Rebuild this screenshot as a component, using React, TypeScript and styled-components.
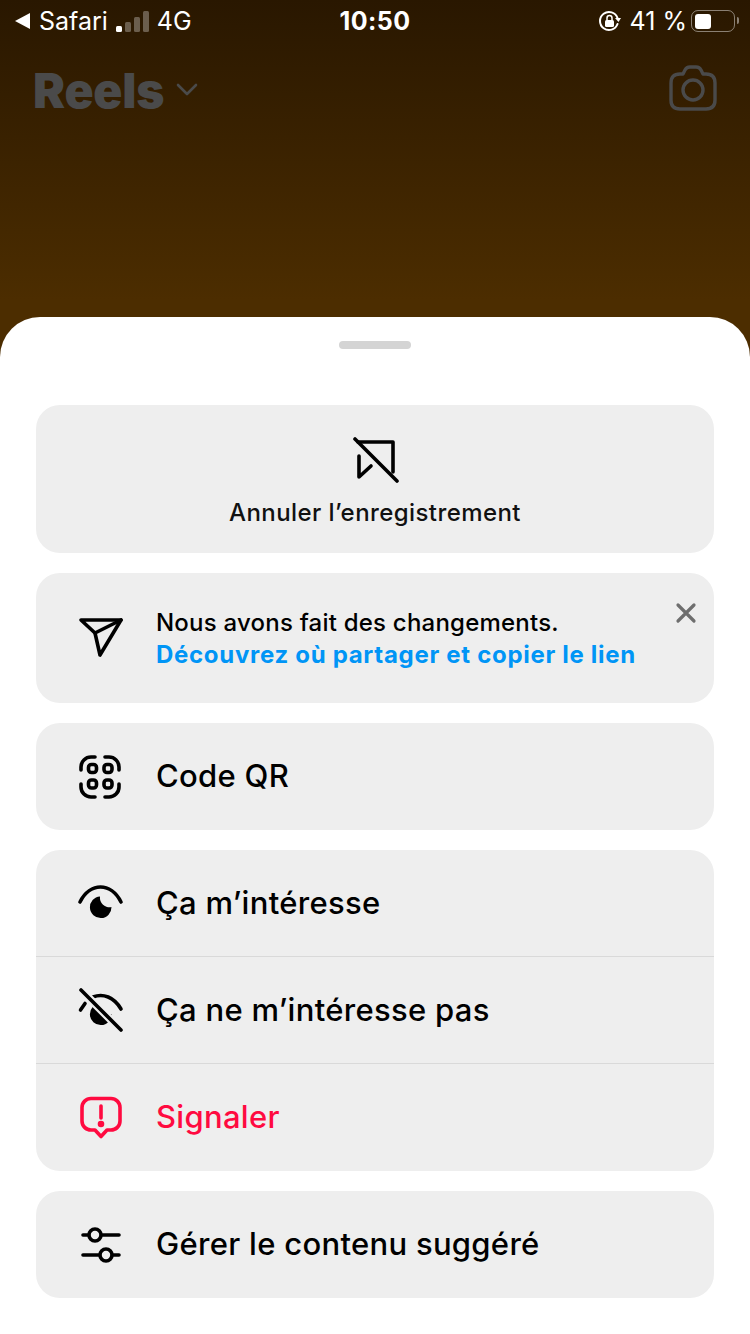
import styled, { createGlobalStyle } from 'styled-components';

const GlobalStyle = createGlobalStyle`
  html, body {
    margin: 0;
    padding: 0;
    background: #fff;
  }
  * {
    box-sizing: border-box;
  }
`;

const Page = styled.div`
  width: 750px;
  height: 1334px;
  overflow: hidden;
  display: flex;
  flex-direction: column;
  font-family: Inter, 'Liberation Sans', sans-serif;
  background: linear-gradient(#291700 0, #4c2d00 300px);
`;

const StatusBar = styled.div`
  height: 42px;
  padding: 0 15px;
  display: grid;
  grid-template-columns: 1fr auto 1fr;
  align-items: center;
  color: #fff;
  font-size: 25px;
`;

const StatusLeft = styled.div`
  display: flex;
  align-items: center;
`;

const StatusRight = styled.div`
  display: flex;
  align-items: center;
  justify-content: flex-end;
`;

const Clock = styled.div`
  font-size: 25px;
  font-weight: 700;
  letter-spacing: 0.4px;
`;

const Carrier = styled.span`
  margin-left: 9px;
`;

const Network = styled.span`
  margin-left: 8px;
`;

const Percent = styled.span`
  margin-left: 8px;
  margin-right: 4px;
`;

const Bars = styled.div`
  margin-left: 8px;
  display: flex;
  align-items: flex-end;
  gap: 3px;
  height: 21px;
`;

const Bar = styled.div<{ $h: number; $on?: boolean }>`
  width: 6px;
  height: ${(p) => p.$h}px;
  border-radius: 1.5px;
  background: ${(p) => (p.$on ? '#fff' : 'rgba(255,255,255,0.3)')};
`;

const Battery = styled.div`
  width: 44px;
  height: 22px;
  padding: 2.5px;
  border: 1.5px solid rgba(255, 255, 255, 0.45);
  border-radius: 7px;
  position: relative;
`;

const BatteryFill = styled.div`
  width: 16px;
  height: 100%;
  border-radius: 3px;
  background: #fff;
`;

const BatteryNub = styled.div`
  position: absolute;
  right: -5px;
  top: 6px;
  width: 2px;
  height: 7px;
  border-radius: 0 2px 2px 0;
  background: rgba(255, 255, 255, 0.45);
`;

const Header = styled.div`
  height: 275px;
  padding: 20px 33px 0 33px;
  display: flex;
  align-items: flex-start;
  justify-content: space-between;
`;

const TitleRow = styled.div`
  display: flex;
  align-items: center;
  height: 56px;
  gap: 12px;
`;

const Title = styled.div`
  font-size: 48px;
  font-weight: 900;
  letter-spacing: -0.2px;
  color: #4a4a4a;
`;

const CameraIcon = styled.svg`
  display: block;
  margin-top: 3px;
  fill: none;
  stroke: #4a4a4a;
  stroke-width: 3.4;
  stroke-linejoin: round;
`;

const Sheet = styled.div`
  flex: 1;
  background: #fff;
  border-radius: 40px 40px 0 0;
  padding: 24px 36px 0;
  display: flex;
  flex-direction: column;
`;

const Handle = styled.div`
  width: 72px;
  height: 8px;
  border-radius: 4px;
  background: #d4d4d4;
  align-self: center;
  margin-bottom: 56px;
`;

const Card = styled.div`
  background: #eeeeee;
  border-radius: 24px;
  margin-bottom: 20px;
  position: relative;
`;

const SaveCard = styled(Card)`
  height: 148px;
  display: flex;
  flex-direction: column;
  align-items: center;
  padding-top: 31px;
`;

const SaveLabel = styled.div`
  margin-top: 14px;
  font-size: 24px;
  font-weight: 500;
  letter-spacing: 0.42px;
  color: #111;
`;

const Row = styled.div<{ $divided?: boolean; $h?: number }>`
  height: ${(p) => p.$h ?? 107}px;
  padding-left: 40px;
  display: flex;
  align-items: center;
  gap: 32px;
  border-top: ${(p) => (p.$divided ? '1px solid #d9d9d9' : 'none')};
`;

const RowLabel = styled.div<{ $danger?: boolean }>`
  font-size: 31px;
  font-weight: 500;
  letter-spacing: 0.3px;
  padding-bottom: 2px;
  color: ${(p) => (p.$danger ? '#ff0a40' : '#000')};
`;

const Notice = styled.div`
  font-size: 24px;
  line-height: 32px;
  font-weight: 500;
  letter-spacing: 0.22px;
  padding-top: 2px;
  color: #000;
`;

const NoticeLink = styled.div`
  color: #0095f6;
  font-weight: 700;
  letter-spacing: 0.7px;
`;

const CloseButton = styled.div`
  position: absolute;
  top: 29px;
  right: 17px;
  width: 22px;
  height: 22px;
`;

const Icon = styled.svg<{ $color?: string }>`
  display: block;
  flex: none;
  width: 48px;
  height: 48px;
  fill: none;
  stroke: ${(p) => p.$color ?? '#000'};
  stroke-width: 3.6;
  stroke-linecap: round;
  stroke-linejoin: round;
`;

function SaveOffIcon() {
  return (
    <Icon viewBox="0 0 48 48">
      <path d="M7 6 H42 V36" />
      <path d="M4 3 L46 45" />
      <path d="M8 20 V41 L20 30" />
    </Icon>
  );
}

function SendIcon() {
  return (
    <Icon viewBox="0 0 48 48">
      <path d="M5 6 H45 L24 41 L19 19 Z" />
      <path d="M19 19 L45 6" />
    </Icon>
  );
}

function QrIcon() {
  return (
    <Icon viewBox="0 0 48 48">
      <path d="M5 17 V14 a10 10 0 0 1 10 -10 h4" />
      <path d="M29 4 h4 a10 10 0 0 1 10 10 v3" />
      <path d="M5 31 v3 a10 10 0 0 0 10 10 h4" />
      <path d="M43 31 v3 a10 10 0 0 1 -10 10 h-4" />
      <rect x="12.500" y="11.500" width="8" height="8" rx="3" />
      <rect x="28" y="11.500" width="8" height="8" rx="3" />
      <rect x="12.500" y="27" width="8" height="8" rx="3" />
      <rect x="28" y="27" width="8" height="8" rx="3" />
    </Icon>
  );
}

function EyeIcon() {
  return (
    <Icon viewBox="0 0 48 48">
      <path d="M4 23 C9 13 17 8 24.500 8 C32 8 40 13 45 23" />
      <path
        d="M24 17.500 A10.800 10.800 0 1 0 35.500 28 A9.500 9.500 0 0 1 24 17.500 Z"
        fill="#000"
        stroke="none"
      />
    </Icon>
  );
}

function EyeOffIcon() {
  return (
    <Icon viewBox="0 0 48 48">
      <path d="M17 11 C27 7 38 11 45 23" />
      <path d="M4.500 24 L9 17.500" />
      <path
        d="M24 17.500 A10.800 10.800 0 1 0 35.500 28 A9.500 9.500 0 0 1 24 17.500 Z"
        fill="#000"
        stroke="none"
      />
      <path d="M3 2 L46 45" stroke="#eeeeee" strokeWidth="8" />
      <path d="M5 4 L45 44" />
    </Icon>
  );
}

function ReportIcon() {
  return (
    <Icon viewBox="0 0 48 48" $color="#ff0a40">
      <path d="M15 4.500 H35 A9 9 0 0 1 44 13.500 V27 A9 9 0 0 1 35 36 H31 L25 42.500 L19 36 H15 A9 9 0 0 1 6 27 V13.500 A9 9 0 0 1 15 4.500 Z" />
      <path d="M25 12 V24" />
      <circle cx="25" cy="30" r="1.500" fill="#ff0a40" />
    </Icon>
  );
}

function SlidersIcon() {
  return (
    <Icon viewBox="0 0 48 48">
      <path d="M7 14 H43 M7 34 H43" />
      <circle cx="19" cy="14" r="6" fill="#eeeeee" />
      <circle cx="30" cy="34" r="6" fill="#eeeeee" />
    </Icon>
  );
}

export default function App() {
  return (
    <Page>
      <GlobalStyle />
      <StatusBar>
        <StatusLeft>
          <svg width="15" height="16" viewBox="0 0 15 16">
            <path d="M15 0 V16 L0 8 Z" fill="#fff" />
          </svg>
          <Carrier>Safari</Carrier>
          <Bars>
            <Bar $h={6} $on />
            <Bar $h={10} />
            <Bar $h={15} />
            <Bar $h={21} />
          </Bars>
          <Network>4G</Network>
        </StatusLeft>
        <Clock>10:50</Clock>
        <StatusRight>
          <svg width="24" height="22" viewBox="0 0 24 22" fill="none">
            <path
              d="M19.500 8 A9 9 0 1 0 19.500 14"
              stroke="#fff"
              strokeWidth="2"
              strokeLinecap="round"
            />
            <path d="M17 8 L23 8 L20.500 12 Z" fill="#fff" />
            <rect x="7" y="10" width="9" height="7" rx="1.500" fill="#fff" />
            <path d="M9 10 V8 a2.500 2.500 0 0 1 5 0 V10" stroke="#fff" strokeWidth="1.500" />
          </svg>
          <Percent>41 %</Percent>
          <Battery>
            <BatteryFill />
            <BatteryNub />
          </Battery>
        </StatusRight>
      </StatusBar>
      <Header>
        <TitleRow>
          <Title>Reels</Title>
          <svg width="22" height="14" viewBox="0 0 22 14" fill="none">
            <path
              d="M2 2 L11 11 L20 2"
              stroke="#4a4a4a"
              strokeWidth="2.600"
              strokeLinecap="round"
              strokeLinejoin="round"
            />
          </svg>
        </TitleRow>
        <CameraIcon width="48" height="46" viewBox="0 0 48 46">
          <path d="M14 9 L16 5 Q17.500 2 21 2 H27 Q30.500 2 32 5 L34 9 H37 Q46 9 46 18 V35 Q46 44 37 44 H11 Q2 44 2 35 V18 Q2 9 11 9 Z" />
          <circle cx="24" cy="25" r="10" />
        </CameraIcon>
      </Header>
      <Sheet>
        <Handle />
        <SaveCard>
          <SaveOffIcon />
          <SaveLabel>Annuler l’enregistrement</SaveLabel>
        </SaveCard>
        <Card>
          <Row $h={130}>
            <SendIcon />
            <Notice>
              Nous avons fait des changements.
              <NoticeLink>Découvrez où partager et copier le lien</NoticeLink>
            </Notice>
          </Row>
          <CloseButton>
            <svg width="22" height="22" viewBox="0 0 22 22" fill="none">
              <path
                d="M3 3 L19 19 M19 3 L3 19"
                stroke="#6e6e6e"
                strokeWidth="3.200"
                strokeLinecap="round"
              />
            </svg>
          </CloseButton>
        </Card>
        <Card>
          <Row>
            <QrIcon />
            <RowLabel>Code QR</RowLabel>
          </Row>
        </Card>
        <Card>
          <Row $h={106}>
            <EyeIcon />
            <RowLabel>Ça m’intéresse</RowLabel>
          </Row>
          <Row $divided>
            <EyeOffIcon />
            <RowLabel>Ça ne m’intéresse pas</RowLabel>
          </Row>
          <Row $divided $h={108}>
            <ReportIcon />
            <RowLabel $danger>Signaler</RowLabel>
          </Row>
        </Card>
        <Card>
          <Row>
            <SlidersIcon />
            <RowLabel>Gérer le contenu suggéré</RowLabel>
          </Row>
        </Card>
      </Sheet>
    </Page>
  );
}
